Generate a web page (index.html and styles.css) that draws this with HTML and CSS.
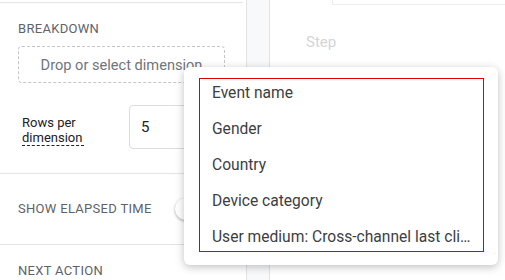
FILE: index.html
```html
<!DOCTYPE html>
<html lang="en">
<head>
  <meta charset="UTF-8">
  <title>Funnel settings</title>
  <link rel="stylesheet" href="styles.css">
</head>
<body>

  <div class="settings">
    <div class="top-edge"></div>

    <div class="section breakdown">
      <div class="label">Breakdown</div>
      <div class="dropzone">Drop or select dimension</div>
      <div class="rows">
        <span class="rows-label">Rows per dimension</span>
        <div class="rows-input">5</div>
      </div>
    </div>

    <div class="section elapsed">
      <div class="label">Show elapsed time</div>
      <div class="switch"><span class="thumb"></span></div>
    </div>

    <div class="section next">
      <div class="label">Next action</div>
    </div>
  </div>

  <div class="gutter"></div>

  <div class="canvas">
    <div class="card-edge"></div>
    <div class="step">Step</div>
  </div>

  <div class="menu">
    <ul class="options">
      <li>Event name</li>
      <li>Gender</li>
      <li>Country</li>
      <li>Device category</li>
      <li>User medium: Cross-channel last click</li>
    </ul>
  </div>

</body>
</html>
```

FILE: styles.css
```css
body {
  margin: 0;
  width: 505px;
  height: 280px;
  overflow: hidden;
  display: flex;
  font-family: Roboto, "Liberation Sans", sans-serif;
  color: #202124;
  background: #fff;
}

.settings {
  width: 246px;
  border-right: 1px solid #e3e3e3;
  flex-shrink: 0;
}
.top-edge {
  height: 2px;
  margin-right: 3px;
  border-bottom: 1px solid #e3e3e3;
}
.section {
  border-bottom: 1px solid #e3e3e3;
  padding: 0 21px 0 18px;
}
.label {
  font-size: 13px;
  line-height: 16px;
  text-transform: uppercase;
  letter-spacing: 0.3px;
  color: #5f6368;
}

.breakdown {
  padding-top: 18px;
  padding-bottom: 24px;
}
.dropzone {
  margin-top: 9px;
  height: 35px;
  border: 1px dashed #c6c6c6;
  border-radius: 4px;
  display: flex;
  align-items: center;
  justify-content: center;
  font-size: 14.6px;
  color: #70757a;
}
.rows {
  margin-top: 22px;
  display: flex;
  align-items: center;
  gap: 45px;
  padding-left: 4px;
}
.rows-label {
  width: 62px;
  font-size: 13px;
  line-height: 15px;
  padding-top: 6px;
  border-bottom: 1px dashed #202124;
}
.rows-input {
  flex: 1;
  height: 42px;
  margin-right: -40px;
  border: 1px solid #dadce0;
  border-radius: 4px;
  padding-left: 11px;
  display: flex;
  align-items: center;
  font-size: 15px;
}

.elapsed {
  height: 70px;
  display: flex;
  align-items: center;
  justify-content: space-between;
  padding-right: 35px;
}
.switch {
  position: relative;
  width: 36px;
  height: 14px;
  border-radius: 7px;
  background: #bdc1c6;
}
.thumb {
  position: absolute;
  left: 0;
  top: -4px;
  width: 22px;
  height: 22px;
  border-radius: 50%;
  background: #fff;
  box-shadow: 0 1px 3px rgba(0,0,0,0.35);
}

.next {
  border-bottom: none;
  padding-top: 18px;
}

.gutter {
  width: 22px;
  flex-shrink: 0;
  background: #f8f9fa;
  border-right: 1px solid #e3e3e3;
}

.canvas {
  flex: 1;
}
.card-edge {
  margin-left: 62px;
  height: 4px;
  border-left: 1px solid #eeeeee;
  border-bottom: 1px solid #eeeeee;
}
.step {
  margin-top: 28px;
  padding-left: 36px;
  font-size: 15px;
  color: #d3d5d8;
}

.menu {
  position: absolute;
  left: 184px;
  top: 67px;
  width: 314px;
  height: 198px;
  background: #fff;
  border-radius: 6px;
  box-shadow: 0 2px 8px rgba(0,0,0,0.25);
}
.options {
  list-style: none;
  margin: 8px 11px 0 12px;
  padding: 0;
  outline: 1px solid #e00000;
  outline-offset: -4px;
}
.options li {
  height: 36px;
  line-height: 36px;
  padding: 0 14px 0 16px;
  font-size: 15.6px;
  color: #3c4043;
  white-space: nowrap;
  overflow: hidden;
  text-overflow: ellipsis;
}
```
